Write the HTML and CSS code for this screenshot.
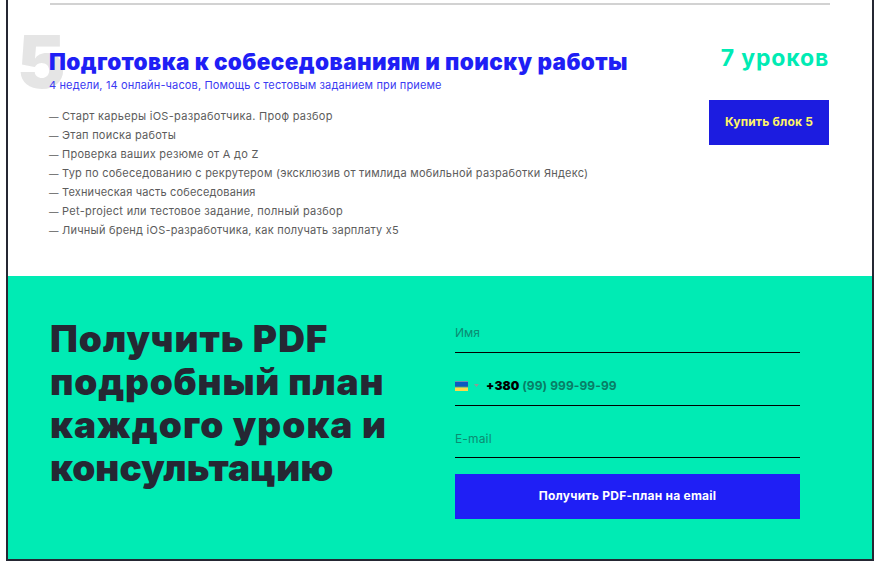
FILE: index.html
```html
<!DOCTYPE html>
<html lang="ru">
<head>
<meta charset="utf-8">
<title>Программа курса</title>
<link rel="stylesheet" href="styles.css">
</head>
<body>
<main class="page">
  <section class="block">
    <div class="info">
      <span class="num">5</span>
      <h2>Подготовка к собеседованиям и поиску работы</h2>
      <p class="meta">4 недели, 14 онлайн-часов, Помощь с тестовым заданием при приеме</p>
      <ul>
        <li class="l1"><span class="dash">—</span> Старт карьеры iOS-разработчика. Проф разбор</li>
        <li class="l2"><span class="dash">—</span> Этап поиска работы</li>
        <li class="l3"><span class="dash">—</span> Проверка ваших резюме от А до Z</li>
        <li class="l4"><span class="dash">—</span> Тур по собеседованию с рекрутером (эксклюзив от тимлида мобильной разработки Яндекс)</li>
        <li class="l5"><span class="dash">—</span> Техническая часть собеседования</li>
        <li class="l6"><span class="dash">—</span> Pet-project или тестовое задание, полный разбор</li>
        <li class="l7"><span class="dash">—</span> Личный бренд iOS-разработчика, как получать зарплату х5</li>
      </ul>
    </div>
    <div class="side">
      <div class="count">7 уроков</div>
      <button class="buy">Купить блок 5</button>
    </div>
  </section>
  <section class="lead">
    <h1><span class="t1">Получить PDF</span><span class="t2">подробный план</span><span class="t3">каждого урока и</span><span class="t4">консультацию</span></h1>
    <form>
      <label class="field name">Имя</label>
      <label class="field phone">
        <svg class="flag" width="13" height="10" viewBox="0 0 13 10"><path fill="#6f8fb5" d="M0 0h13v1.500H0z"/><path fill="#0a5bc0" d="M0 1h13v5H0z"/><path fill="#5b8a80" d="M0 5.500h13v1H0z"/><path fill="#ffd948" d="M0 6.500h13V10H0z"/></svg>
        <svg class="arrow" width="5" height="3" viewBox="0 0 5 3"><path fill="#8f9a96" d="M0 0h5L2.500 3z"/></svg>
        <span class="tel"><b>+380</b> (99) 999-99-99</span>
      </label>
      <label class="field mail">E-mail</label>
      <button type="button" class="send">Получить PDF-план на email</button>
    </form>
  </section>
</main>
</body>
</html>
```
FILE: styles.css
```css
* { box-sizing: border-box; margin: 0; padding: 0; }
body { background: #fff; font-family: Inter, "Noto Sans", sans-serif; color: #252733; }
.page { display: flow-root; width: 868px; height: 561px; margin-left: 6px; border: solid #252733; border-width: 0 2px 2px; }
.block { height: 273px; margin: 3px 42px 0; border-top: 2px solid #d2d2d2; display: flex; justify-content: space-between; }
.info { position: relative; padding-top: 43px; margin-left: -1px; }
.num { position: absolute; left: -32px; top: 17px; font-size: 73px; line-height: 80px; font-weight: 900; color: #e5e5e5; z-index: -1; }
h2 { font-size: 22.5px; line-height: 28px; font-weight: 900; letter-spacing: 0.4px; color: #1f1ff5; white-space: nowrap; }
.meta { font-size: 11px; line-height: 19px; letter-spacing: 0.135px; color: #3a3af2; white-space: nowrap; }
ul { list-style: none; margin-top: 12px; font-size: 11px; line-height: 19px; color: #5c5c5c; white-space: nowrap; }
li { display: flex; }
.dash { width: 13px; font-size: 9.5px; letter-spacing: 0; }
.l1 { letter-spacing: 0.29px; }
.l2 { letter-spacing: 0.25px; }
.l3 { letter-spacing: 0.28px; }
.l4 { letter-spacing: 0.235px; }
.l5 { letter-spacing: 0.16px; }
.l6 { letter-spacing: 0.29px; }
.l7 { letter-spacing: 0.24px; }
.side { width: 120px; padding-top: 39px; margin-right: 1px; }
.count { display: flex; justify-content: flex-end; font-size: 23px; line-height: 28px; font-weight: 700; letter-spacing: 0.85px; color: #00ebb4; white-space: nowrap; }
button { border: 0; font: 700 12px/15px Inter, sans-serif; height: 45px; width: 100%; display: block; padding-bottom: 2px; }
.buy { background: #1c1ce0; color: #fff566; margin-top: 28px; letter-spacing: 0.18px; }
.lead { background: #00ebb4; height: 283px; padding: 41px 72px 0 42px; display: flex; justify-content: space-between; }
h1 { font-size: 37px; line-height: 43px; font-weight: 900; }
h1 span { display: block; white-space: nowrap; }
.t1 { letter-spacing: 1px; }
.t2 { letter-spacing: 0.8px; }
.t3 { letter-spacing: 1.05px; }
.t4 { letter-spacing: 0.1px; }
form { width: 345px; }
.field { display: flex; align-items: flex-end; height: 53px; padding-bottom: 10px; border-bottom: 1px solid #000; font-size: 12px; line-height: 18px; color: #0b8c72; }
.name { height: 36px; }
.mail { height: 52px; padding-bottom: 9px; letter-spacing: 0.15px; }
.flag { margin-bottom: 4px; }
.arrow { margin: 0 7px 8px 6px; }
.tel { font-weight: 700; letter-spacing: 0.08px; color: #087e66; }
.tel b { color: #000; }
.send { background: #1f1ff5; color: #fff; margin-top: 16px; padding-bottom: 3px; letter-spacing: 0.25px; }
```
